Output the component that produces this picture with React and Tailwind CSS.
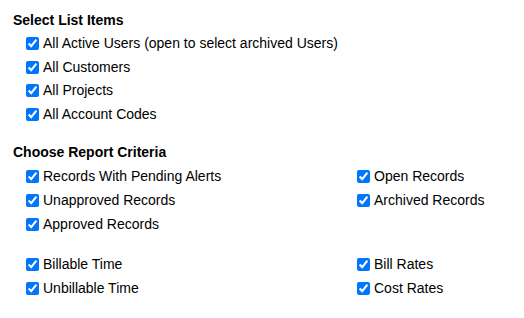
import React from 'react';

const Check = ({ label, h = 'h-[24px]' }) => (
	<label className={`flex ${h} items-center gap-[4px]`}>
		<input type="checkbox" defaultChecked className="h-[13px] w-[13px] shrink-0" />
		<span>{label}</span>
	</label>
);

const App = () => {
	const listItems = ['All Active Users (open to select archived Users)', 'All Customers', 'All Projects', 'All Account Codes'];

	return (
		<div className="h-[318px] w-[524px] bg-white pl-[13px] pt-[10px] text-[14px] text-black" style={{ fontFamily: '"Liberation Sans", Arial, sans-serif' }}>
			<h2 className="h-[20px] text-[14px] font-bold leading-[20px]">Select List Items</h2>
			<div className="mt-[2px] pl-[13px]">
				{listItems.map((item) => (
					<Check key={item} label={item} h="h-[23.5px]" />
				))}
			</div>

			<h2 className="mt-[16px] h-[20px] text-[14px] font-bold leading-[20px]">Choose Report Criteria</h2>
			<div className="mt-[2px] grid grid-cols-[331px_1fr] pl-[13px]">
				<div>
					<Check label="Records With Pending Alerts" />
					<Check label="Unapproved Records" />
					<Check label="Approved Records" />
				</div>
				<div>
					<Check label="Open Records" />
					<Check label="Archived Records" />
				</div>
				<div className="mt-[16px]">
					<Check label="Billable Time" />
					<Check label="Unbillable Time" />
				</div>
				<div className="mt-[16px]">
					<Check label="Bill Rates" />
					<Check label="Cost Rates" />
				</div>
			</div>
		</div>
	);
};

export default App;
